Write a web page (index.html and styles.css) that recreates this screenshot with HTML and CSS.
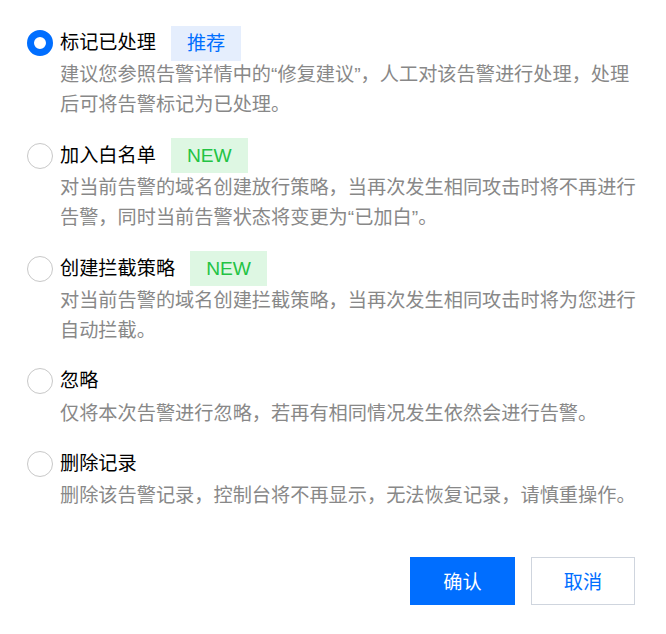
FILE: index.html
```html
<!DOCTYPE html>
<html lang="zh-CN">
<head>
<meta charset="utf-8">
<link rel="stylesheet" href="styles.css">
</head>
<body>
<div class="panel">
  <div class="options">
    <div class="option">
      <div class="title-row">
        <span class="radio radio-checked"></span>
        <span class="title">标记已处理</span>
        <span class="tag tag-blue">推荐</span>
      </div>
      <div class="desc">建议您参照告警详情中的“修复建议”，人工对该告警进行处理，处理后可将告警标记为已处理。</div>
    </div>
    <div class="option">
      <div class="title-row">
        <span class="radio"></span>
        <span class="title">加入白名单</span>
        <span class="tag tag-green">NEW</span>
      </div>
      <div class="desc">对当前告警的域名创建放行策略，当再次发生相同攻击时将不再进行告警，同时当前告警状态将变更为“已加白”。</div>
    </div>
    <div class="option">
      <div class="title-row">
        <span class="radio"></span>
        <span class="title">创建拦截策略</span>
        <span class="tag tag-green">NEW</span>
      </div>
      <div class="desc">对当前告警的域名创建拦截策略，当再次发生相同攻击时将为您进行自动拦截。</div>
    </div>
    <div class="option">
      <div class="title-row">
        <span class="radio"></span>
        <span class="title">忽略</span>
      </div>
      <div class="desc">仅将本次告警进行忽略，若再有相同情况发生依然会进行告警。</div>
    </div>
    <div class="option">
      <div class="title-row">
        <span class="radio"></span>
        <span class="title">删除记录</span>
      </div>
      <div class="desc">删除该告警记录，控制台将不再显示，无法恢复记录，请慎重操作。</div>
    </div>
  </div>
  <div class="footer">
    <button class="btn btn-primary">确认</button>
    <button class="btn btn-default">取消</button>
  </div>
</div>
</body>
</html>
```

FILE: styles.css
```css
html, body {
  margin: 0;
  padding: 0;
  background: #ffffff;
}
body {
  font-family: "Liberation Sans", "Noto Sans CJK SC", sans-serif;
  font-size: 19.2px;
  color: #000000;
}
.panel {
  padding: 28px 20px 0 27px;
}
.options {
  display: flex;
  flex-direction: column;
  gap: 20.5px;
}
.title-row {
  display: flex;
  align-items: center;
  height: 30px;
}
.radio {
  box-sizing: border-box;
  width: 26px;
  height: 26px;
  border-radius: 50%;
  border: 1px solid #c8c8c8;
  background: #fff;
  flex: none;
  margin-right: 7px;
}
.radio-checked {
  border: 7px solid #006eff;
}
.title {
  line-height: 30px;
  color: #000;
}
.tag {
  margin-left: 15px;
  height: 35px;
  line-height: 35px;
  padding: 0 16px;
  flex: none;
}
.tag-blue {
  background: #e5eefd;
  color: #006eff;
}
.tag-green {
  background: #def7e3;
  color: #23c344;
}
.desc {
  margin-left: 33px;
  margin-top: 2.3px;
  line-height: 30px;
  color: #888888;
}
.footer {
  display: flex;
  justify-content: flex-end;
  gap: 16px;
  margin-top: 46px;
  padding-right: 11px;
}
.btn {
  box-sizing: border-box;
  height: 48px;
  font-family: inherit;
  font-size: 19.2px;
  border-radius: 0;
  cursor: pointer;
}
.btn-primary {
  width: 105px;
  background: #006eff;
  border: 1px solid #006eff;
  color: #fff;
}
.btn-default {
  width: 104px;
  background: #fff;
  border: 1px solid #cfd5de;
  color: #006eff;
}
```
